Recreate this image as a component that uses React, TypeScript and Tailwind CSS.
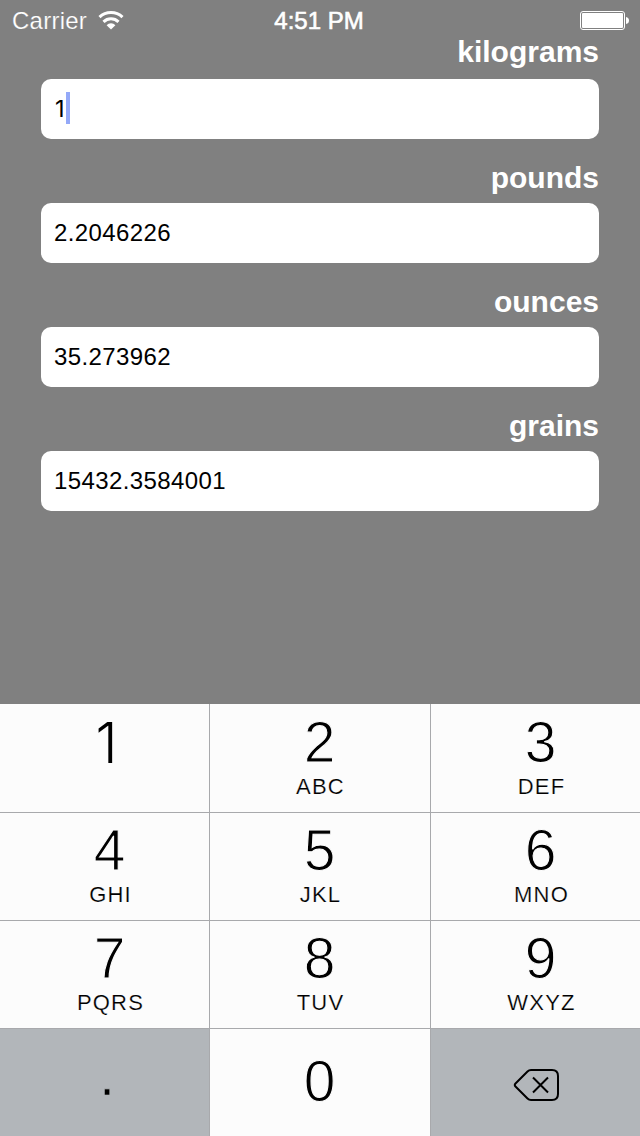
type Unit = { name: string; value: string; active?: boolean };

const units: Unit[] = [
  { name: 'kilograms', value: '1', active: true },
  { name: 'pounds', value: '2.2046226' },
  { name: 'ounces', value: '35.273962' },
  { name: 'grains', value: '15432.3584001' },
];

const rows = [
  [['1', ''], ['2', 'ABC'], ['3', 'DEF']],
  [['4', 'GHI'], ['5', 'JKL'], ['6', 'MNO']],
  [['7', 'PQRS'], ['8', 'TUV'], ['9', 'WXYZ']],
];

const columnPad = ['pl-[10px] border-r', 'pr-px border-r', 'pl-[10px]'];

const digit = 'text-[57px] leading-[56px] text-black [-webkit-text-stroke:1.1px_#fcfcfc]';
const digitOne = "text-[56px] leading-[58px] -mb-0.5 pr-1.5 text-black font-light font-['Inter']";

function WifiIcon() {
  return (
    <svg width="26" height="20" viewBox="0 0 26 20" fill="none" stroke="white" strokeWidth="3">
      <path d="M1.5 6.2A16.6 16.6 0 0 1 24.5 6.2" />
      <path d="M5.5 10.9A10.8 10.8 0 0 1 20.5 10.9" />
      <path d="M13 18.6L8.6 14.2A6.2 6.2 0 0 1 17.4 14.2Z" fill="white" stroke="none" />
    </svg>
  );
}

function Battery() {
  return (
    <svg width="49" height="20" viewBox="0 0 49 20">
      <rect x="0.5" y="0.5" width="44" height="18" rx="2.5" fill="none" stroke="white" />
      <rect x="2" y="2" width="41" height="15" rx="1" fill="white" />
      <path d="M46 6Q49 6.5 49 9.5T46 13Z" fill="white" />
    </svg>
  );
}

function StatusBar() {
  return (
    <header className="grid h-10 grid-cols-[1fr_auto_1fr] items-center pl-3 pr-[11px] pt-px text-[24px] text-white">
      <div className="flex items-center gap-[11px]">
        <span className="tracking-[0.25px] [-webkit-text-stroke:0.2px_#808080]">Carrier</span>
        <WifiIcon />
      </div>
      <span className="pr-[3px] [-webkit-text-stroke:0.6px_white]">4:51 PM</span>
      <div className="flex justify-end">
        <Battery />
      </div>
    </header>
  );
}

function Field({ name, value, active }: Unit) {
  return (
    <section>
      <h2 className={`text-right text-[30px] leading-6 font-bold text-white ${active ? 'mb-[15px]' : 'mb-[13px]'}`}>
        {name}
      </h2>
      <div className="flex h-[60px] items-center rounded-[10px] bg-white pl-[13px] text-[24px] text-black">
        <span className={active ? "w-3 pl-px font-['Inter'] text-[23.5px]" : 'tracking-[0.4px]'}>{value}</span>
        {active && <span className="h-8 w-1 -translate-y-px bg-[#94a9f8]" />}
      </div>
    </section>
  );
}

function Keypad() {
  return (
    <div className="grid h-[432px] grid-cols-[210px_221px_209px] grid-rows-[109px_108px_108px_107px] bg-[#fcfcfc]">
      {rows.map((row, r) =>
        row.map(([number, letters], c) => (
          <div
            key={number}
            className={`flex flex-col items-center border-b border-[#a8a9ac] ${columnPad[c]} ${r === 0 ? 'pt-[10px]' : 'pt-[9px]'}`}
          >
            <span className={number === '1' ? digitOne : digit}>{number}</span>
            <span className="mt-[5px] pl-0.5 text-[22px] leading-6 tracking-[1.2px] [-webkit-text-stroke:0.2px_#fcfcfc]">{letters}</span>
          </div>
        )),
      )}
      <div className="flex justify-center border-r border-[#a8a9ac] bg-[#b2b6ba] pl-[5px] pt-[18px]">
        <span className="text-[58px] leading-[56px] [-webkit-text-stroke:0.6px_#b2b6ba]">.</span>
      </div>
      <div className="flex justify-center border-r border-[#a8a9ac] pr-px pt-6">
        <span className={digit}>0</span>
      </div>
      <div className="flex items-center justify-center bg-[#b2b6ba] pl-px pt-[5px]">
        <svg width="46" height="34" viewBox="0 0 46 34" fill="none" stroke="black" strokeWidth="2" strokeLinejoin="round">
          <path d="M18 2H39Q45 2 45 8V26Q45 32 39 32H18Q16 32 14.5 30.5L2.5 18.5Q1 17 2.5 15.5L14.5 3.5Q16 2 18 2Z" />
          <path d="M20 9.5L35 24.5M35 9.5L20 24.5" />
        </svg>
      </div>
    </div>
  );
}

export default function App() {
  return (
    <div className="flex h-[1136px] w-[640px] flex-col overflow-hidden bg-[#808080] font-['Liberation_Sans',Arial,sans-serif]">
      <StatusBar />
      <main className="flex flex-1 flex-col gap-[27px] px-[41px]">
        {units.map((unit) => (
          <Field key={unit.name} {...unit} />
        ))}
      </main>
      <Keypad />
    </div>
  );
}
